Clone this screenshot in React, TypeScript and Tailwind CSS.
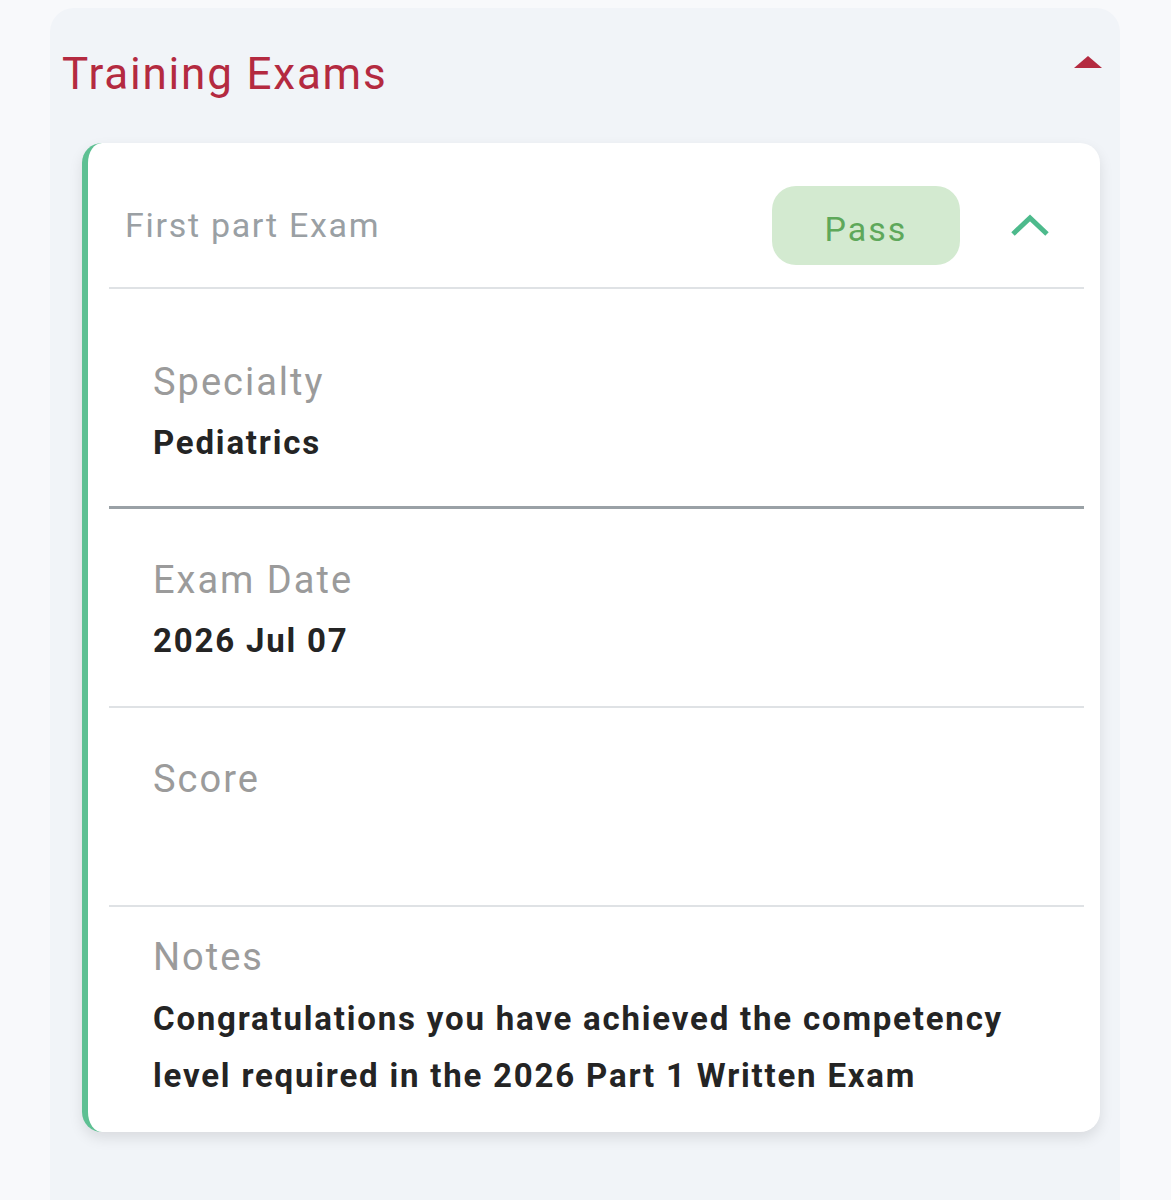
const rowLabel = "text-[38px] leading-[46px] text-[#9b9b9b] tracking-[2px]";
const rowValue = "text-[33px] leading-[57px] font-bold text-[#242424] tracking-[1.8px]";

function Field({ label, value, className }: { label: string; value?: string; className: string }) {
  return (
    <div className={className}>
      <div className={rowLabel}>{label}</div>
      <div className={rowValue + " mt-[9px] min-h-[57px]"}>{value}</div>
    </div>
  );
}

export default function App() {
  return (
    <div className="min-h-[1200px] bg-[#f8f9fb] pt-2 pl-[50px] pr-[51px] font-['Roboto',sans-serif]">
      <div className="h-[1220px] rounded-[24px] bg-[#f1f4f8] pt-[40px] pl-[12px] pr-[20px]">
        <div className="flex items-center justify-between pr-0">
          <h1 className="text-[44px] leading-[52px] text-[#b42a40] tracking-[1.8px]">Training Exams</h1>
          <svg width="28" height="14" viewBox="0 0 28 14" className="-mt-6 mr-[-2px]">
            <polygon points="0,13 14,1 28,13" fill="#b42a40" />
          </svg>
        </div>

        <div className="mt-[43px] ml-[20px] rounded-[20px] border-l-[6px] border-[#5ec093] bg-white shadow-[0_6px_14px_rgba(0,0,0,0.10)] pl-[21px] pr-[16px]">
          <div className="flex items-center h-[146px] pt-[20px] border-b-2 border-[#dfe2e5]">
            <span className="ml-[16px] text-[34px] text-[#9aa0a4] tracking-[1.7px]">First part Exam</span>
            <span className="ml-auto flex items-center justify-center w-[188px] h-[79px] rounded-[24px] bg-[#d3ead0] text-[34px] text-[#5ea85a] tracking-[2px] pt-[8px]">
              Pass
            </span>
            <svg width="40" height="24" viewBox="0 0 40 24" className="ml-[50px] mr-[34px]">
              <polyline points="3,21 20,5 37,21" fill="none" stroke="#4dba8c" strokeWidth="5" />
            </svg>
          </div>

          <div className="border-b-[3px] border-[#9aa1a6]">
            <Field label="Specialty" value="Pediatrics" className="pl-[44px] pt-[70px] pb-[35px]" />
          </div>
          <div className="border-b-2 border-[#dfe2e5]">
            <Field label="Exam Date" value="2026 Jul 07" className="pl-[44px] pt-[48px] pb-[37px]" />
          </div>
          <div className="border-b-2 border-[#dfe2e5]">
            <Field label="Score" className="pl-[44px] pt-[48px] pb-[37px]" />
          </div>
          <div className="pl-[44px] pt-[27px] pb-[28px]">
            <div className={rowLabel}>Notes</div>
            <div className={rowValue + " mt-[10px] max-w-[880px]"}>
              Congratulations you have achieved the competency level required in the 2026 Part 1 Written Exam
            </div>
          </div>
        </div>
      </div>
    </div>
  );
}
